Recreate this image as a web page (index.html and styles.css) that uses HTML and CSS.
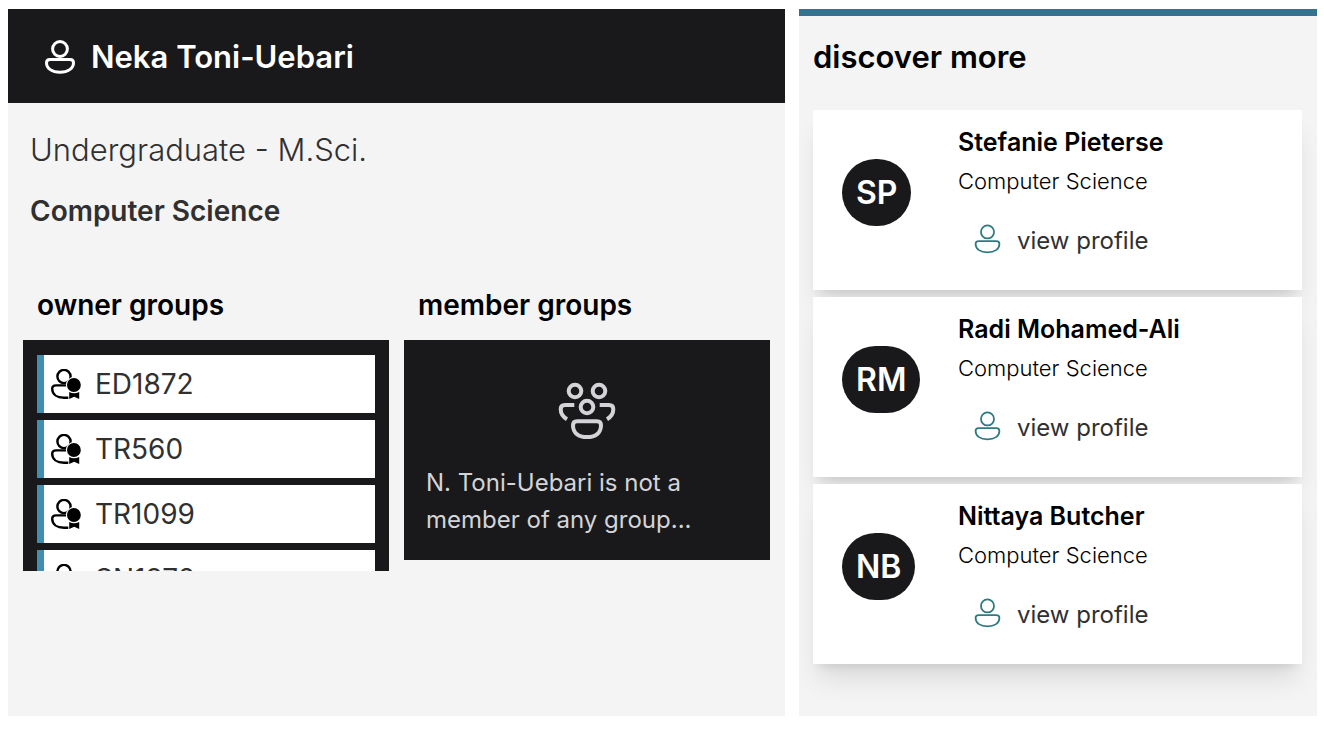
FILE: index.html
```html
<!DOCTYPE html>
<html lang="en">
<head>
<meta charset="utf-8">
<meta name="viewport" content="width=device-width, initial-scale=1">
<title>Neka Toni-Uebari</title>
<link rel="stylesheet" href="styles.css">
</head>
<body>
<svg class="sprite" aria-hidden="true">
  <symbol id="person" viewBox="0 0 30 34">
    <circle cx="15" cy="9" r="7.4"/>
    <path d="M5 19.500h20c2.300 0 3.500 1.200 3.500 3.200C28.500 28.500 23 32.200 15 32.200S1.500 28.500 1.500 22.700c0-2 1.200-3.200 3.500-3.200z"/>
  </symbol>
  <symbol id="owner" viewBox="0 0 30 30">
    <circle cx="13" cy="7.500" r="6.600"/>
    <path d="M18 16.400H5c-2.500 0-3.800 1.200-3.800 3.300 0 5.700 4.800 9 11.800 9h4.300"/>
    <circle class="halo" cx="22.900" cy="16" r="8"/>
    <circle class="solid" cx="22.900" cy="16" r="6.900"/>
    <path class="solid" d="M18.200 23q4.900 2.400 10 0v7l-5-2.200-5 2.200z"/>
  </symbol>
  <symbol id="group" viewBox="0 0 58 58">
    <circle cx="17" cy="9" r="6.300"/>
    <circle cx="41" cy="9" r="6.300"/>
    <circle cx="29" cy="25" r="6.300"/>
    <path d="M16.300 23H7c-3 0-4.300 1.500-4.300 4.300 0 4.200 2.500 7.700 6.300 10M41.700 23H51c3 0 4.300 1.500 4.300 4.300 0 4.200-2.500 7.700-6.300 10"/>
    <path d="M19 39.300h20c2.600 0 4 1.400 4 4 0 7.700-5.600 11.800-14 11.800s-14-4.100-14-11.800c0-2.600 1.400-4 4-4z"/>
  </symbol>
</svg>
<div class="page">
  <main class="panel">
    <header class="banner">
      <svg class="icon-banner" aria-hidden="true"><use href="#person"/></svg>
      <h1 class="title">Neka Toni-Uebari</h1>
    </header>
    <div class="study">
      <p class="level">Undergraduate - M.Sci.</p>
      <p class="course">Computer Science</p>
    </div>
    <div class="groups">
      <section>
        <h2 class="group-title">owner groups</h2>
        <ul class="owner-list">
          <li class="owner-item"><svg class="icon-owner" aria-hidden="true"><use href="#owner"/></svg>ED1872</li>
          <li class="owner-item"><svg class="icon-owner" aria-hidden="true"><use href="#owner"/></svg>TR560</li>
          <li class="owner-item"><svg class="icon-owner" aria-hidden="true"><use href="#owner"/></svg>TR1099</li>
          <li class="owner-item"><svg class="icon-owner" aria-hidden="true"><use href="#owner"/></svg>SN1972</li>
        </ul>
      </section>
      <section>
        <h2 class="group-title">member groups</h2>
        <div class="empty">
          <svg class="icon-group" aria-hidden="true"><use href="#group"/></svg>
          <p class="empty-text">N. Toni-Uebari is not a member of any group...</p>
        </div>
      </section>
    </div>
  </main>
  <aside class="panel discover">
    <h2 class="title">discover more</h2>
    <div class="cards">
      <article class="card">
        <div class="avatar-cell"><span class="avatar">SP</span></div>
        <div>
          <h3 class="name">Stefanie Pieterse</h3>
          <p class="subject">Computer Science</p>
          <a class="view" href="#"><svg class="icon-view" aria-hidden="true"><use href="#person"/></svg>view profile</a>
        </div>
      </article>
      <article class="card">
        <div class="avatar-cell"><span class="avatar">RM</span></div>
        <div>
          <h3 class="name">Radi Mohamed-Ali</h3>
          <p class="subject">Computer Science</p>
          <a class="view" href="#"><svg class="icon-view" aria-hidden="true"><use href="#person"/></svg>view profile</a>
        </div>
      </article>
      <article class="card">
        <div class="avatar-cell"><span class="avatar">NB</span></div>
        <div>
          <h3 class="name">Nittaya Butcher</h3>
          <p class="subject">Computer Science</p>
          <a class="view" href="#"><svg class="icon-view" aria-hidden="true"><use href="#person"/></svg>view profile</a>
        </div>
      </article>
    </div>
  </aside>
</div>
</body>
</html>
```
FILE: styles.css
```css
* {
  box-sizing: border-box;
}

body,
h1,
h2,
h3,
p,
ul {
  margin: 0;
  padding: 0;
}

body {
  background: #fff;
  color: #000;
  font-family: Inter, "Liberation Sans", sans-serif;
}

svg {
  flex: none;
  fill: none;
  stroke: currentColor;
}

.sprite {
  position: absolute;
  width: 0;
  height: 0;
}

.page {
  display: grid;
  grid-template-columns: 3fr 2fr;
  gap: 14px;
  min-height: 100vh;
  padding: 9px 7px 14px 8px;
}

.panel {
  min-width: 0;
  background: #f4f4f4;
}

.banner {
  display: flex;
  align-items: center;
  gap: 16px;
  padding: 24px 37px 22px;
  background: #19191b;
  color: #fff;
}

.title {
  font-size: 31px;
  line-height: 48px;
  font-weight: 600;
}

.icon-banner {
  width: 30px;
  height: 34px;
  stroke-width: 3;
}

.study {
  padding: 22px;
  color: #303030;
}

.level {
  font-size: 31px;
  line-height: 50px;
  font-weight: 300;
}

.course {
  margin-top: 14px;
  font-size: 28px;
  line-height: 44px;
  font-weight: 600;
}

.groups {
  display: grid;
  grid-template-columns: 1fr 1fr;
  gap: 15px;
  padding: 28px 15px;
}

.group-title {
  padding: 0 14px;
  margin-bottom: 13px;
  font-size: 28px;
  line-height: 44px;
  font-weight: 600;
}

.owner-list {
  display: flex;
  flex-direction: column;
  gap: 7px;
  height: 231px;
  padding: 15px 14px;
  overflow: hidden;
  list-style: none;
  background: #19191b;
}

.owner-item {
  display: flex;
  flex: none;
  align-items: center;
  gap: 14px;
  height: 58px;
  padding: 0 7px;
  border-left: 7px solid #418fb0;
  background: #fff;
  color: #303030;
  font-size: 28px;
  line-height: 44px;
}

.icon-owner {
  width: 30px;
  height: 30px;
  color: #000;
  stroke-width: 2.4;
}

.solid {
  fill: currentColor;
  stroke: none;
}

.halo {
  fill: #fff;
  stroke: none;
}

.empty {
  display: flex;
  flex-direction: column;
  align-items: center;
  gap: 24px;
  padding: 42px 22px 22px;
  background: #19191b;
  color: #d4d4d8;
}

.icon-group {
  width: 58px;
  height: 58px;
  stroke-width: 4;
}

.empty-text {
  width: 100%;
  max-width: 300px;
  align-self: flex-start;
  font-size: 24px;
  line-height: 37px;
}

.discover {
  padding: 17px 15px 22px 14px;
  border-top: 7px solid #34738f;
}

.cards {
  display: grid;
  gap: 7px;
  margin-top: 29px;
}

.card {
  display: grid;
  grid-template-columns: 116px 1fr;
  min-height: 180px;
  padding: 14px 29px;
  background: #fff;
  box-shadow: 0 20px 25px -5px rgba(0, 0, 0, 0.1), 0 8px 10px -6px rgba(0, 0, 0, 0.1);
}

.avatar-cell {
  padding-top: 35px;
}

.avatar {
  display: inline-block;
  padding: 12px 14px;
  border-radius: 36px;
  background: #19191b;
  color: #fff;
  font-size: 32px;
  line-height: 43px;
  font-weight: 600;
}

.name {
  font-size: 25px;
  line-height: 37px;
  font-weight: 600;
}

.subject {
  margin-top: 4px;
  font-size: 22px;
  line-height: 33px;
  font-weight: 300;
}

.view {
  display: inline-flex;
  align-items: flex-start;
  gap: 16px;
  margin-top: 24px;
  padding: 0 16px;
  color: #303030;
  font-size: 24px;
  line-height: 37px;
  text-decoration: none;
}

.icon-view {
  width: 27px;
  height: 30px;
  margin-top: 2px;
  color: #2f7a80;
  stroke-width: 2;
}
```
